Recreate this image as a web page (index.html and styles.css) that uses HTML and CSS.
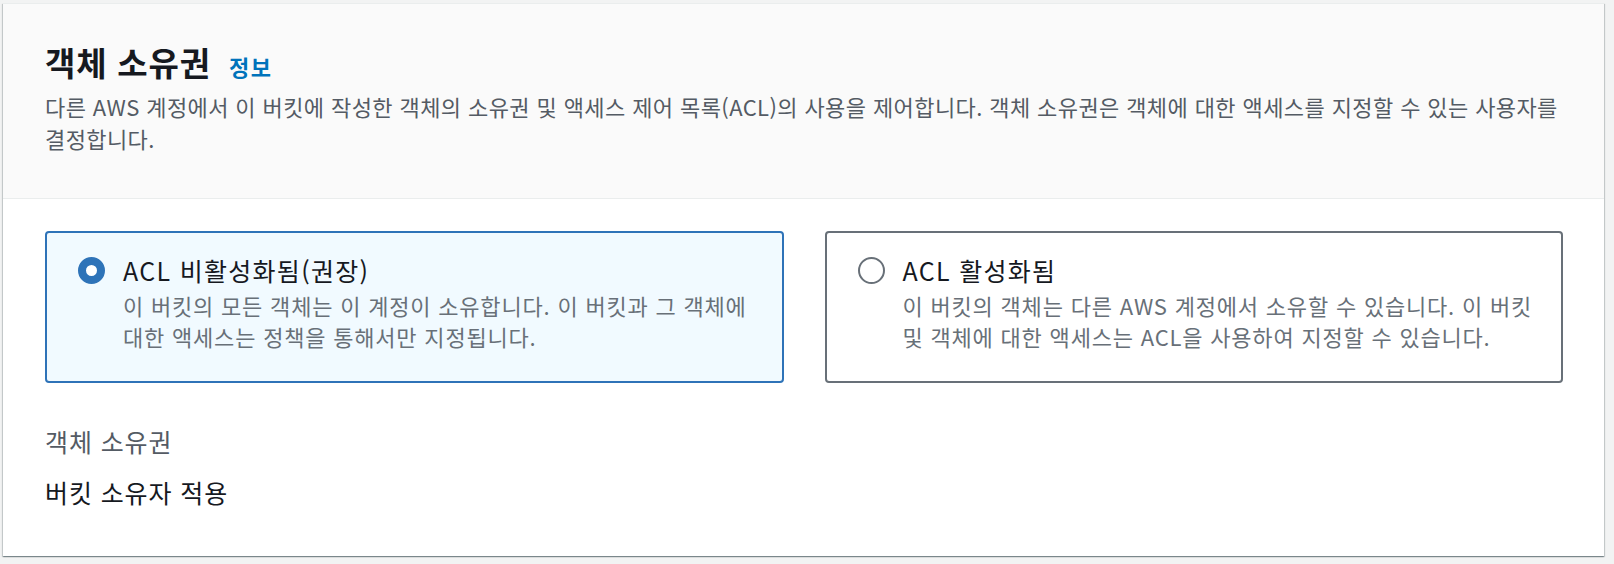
FILE: index.html
```html
<!DOCTYPE html>
<html lang="ko">
<head>
<meta charset="utf-8">
<title>객체 소유권</title>
<link rel="stylesheet" href="styles.css">
</head>
<body>
<section class="container">
  <header class="container-header">
    <h2 class="title">객체 소유권 <a class="info" href="#">정보</a></h2>
    <p class="header-desc">다른 AWS 계정에서 이 버킷에 작성한 객체의 소유권 및 액세스 제어 목록(ACL)의 사용을 제어합니다. 객체 소유권은 객체에 대한 액세스를 지정할 수 있는 사용자를 결정합니다.</p>
  </header>
  <div class="container-body">
    <div class="tiles">
      <label class="tile tile-selected">
        <span class="radio radio-checked"></span>
        <span class="tile-text">
          <span class="tile-title">ACL 비활성화됨(권장)</span>
          <span class="tile-desc">이 버킷의 모든 객체는 이 계정이 소유합니다. 이 버킷과 그 객체에 대한 액세스는 정책을 통해서만 지정됩니다.</span>
        </span>
      </label>
      <label class="tile">
        <span class="radio"></span>
        <span class="tile-text">
          <span class="tile-title">ACL 활성화됨</span>
          <span class="tile-desc">이 버킷의 객체는 다른 AWS 계정에서 소유할 수 있습니다. 이 버킷 및 객체에 대한 액세스는 ACL을 사용하여 지정할 수 있습니다.</span>
        </span>
      </label>
    </div>
    <div class="field">
      <div class="field-label">객체 소유권</div>
      <div class="field-value">버킷 소유자 적용</div>
    </div>
  </div>
</section>
</body>
</html>
```

FILE: styles.css
```css
html, body {
  margin: 0;
  padding: 0;
}
body {
  background: #f2f3f3;
  font-family: "Noto Sans CJK KR", "Noto Sans", sans-serif;
  color: #16191f;
  padding: 3px 10px 7px 3px;
  word-break: keep-all;
}
.container {
  background: #ffffff;
  box-shadow: 0 1px 1px 0 rgba(0, 28, 36, 0.3), 1px 1px 1px 0 rgba(0, 28, 36, 0.15), -1px 1px 1px 0 rgba(0, 28, 36, 0.15);
  border-top: 1px solid #eaeded;
}
.container-header {
  background: #fafafa;
  border-bottom: 1px solid #eaeded;
  padding: 38px 10px 44px 42px;
}
.title {
  margin: 0;
  font-size: 33px;
  line-height: 40px;
  font-weight: 700;
  letter-spacing: 0.8px;
  color: #16191f;
}
.info {
  font-size: 22px;
  font-weight: 700;
  letter-spacing: 1.5px;
  color: #0073bb;
  text-decoration: none;
  margin-left: 8px;
}
.header-desc {
  margin: 4px 0 0 0;
  font-size: 22px;
  line-height: 32px;
  letter-spacing: 0.4px;
  color: #545b64;
}
.container-body {
  padding: 32px 41px 48px 42px;
}
.tiles {
  display: grid;
  grid-template-columns: 1fr 1fr;
  gap: 41px;
}
.tile {
  display: flex;
  align-items: flex-start;
  gap: 18px;
  border: 2px solid #687078;
  border-radius: 4px;
  padding: 21px 14px 29px 31px;
  background: #ffffff;
}
.tile-selected {
  border-color: #2e73b8;
  background: #f1faff;
}
.radio {
  flex: none;
  width: 27px;
  height: 27px;
  box-sizing: border-box;
  border-radius: 50%;
  border: 2px solid #687078;
  background: #ffffff;
  margin-top: 3px;
}
.radio-checked {
  border: 8px solid #2e73b8;
}
.tile-text {
  display: flex;
  flex-direction: column;
}
.tile-title {
  font-size: 25px;
  line-height: 32px;
  letter-spacing: 1.3px;
  color: #16191f;
}
.tile-desc {
  margin-top: 4px;
  font-size: 22px;
  line-height: 31px;
  letter-spacing: 0.8px;
  color: #687078;
}
.field {
  margin-top: 42px;
}
.field-label {
  font-size: 25px;
  line-height: 32px;
  letter-spacing: 0.9px;
  color: #545b64;
}
.field-value {
  margin-top: 19px;
  font-size: 25px;
  line-height: 32px;
  letter-spacing: 0.9px;
  color: #16191f;
}
```
